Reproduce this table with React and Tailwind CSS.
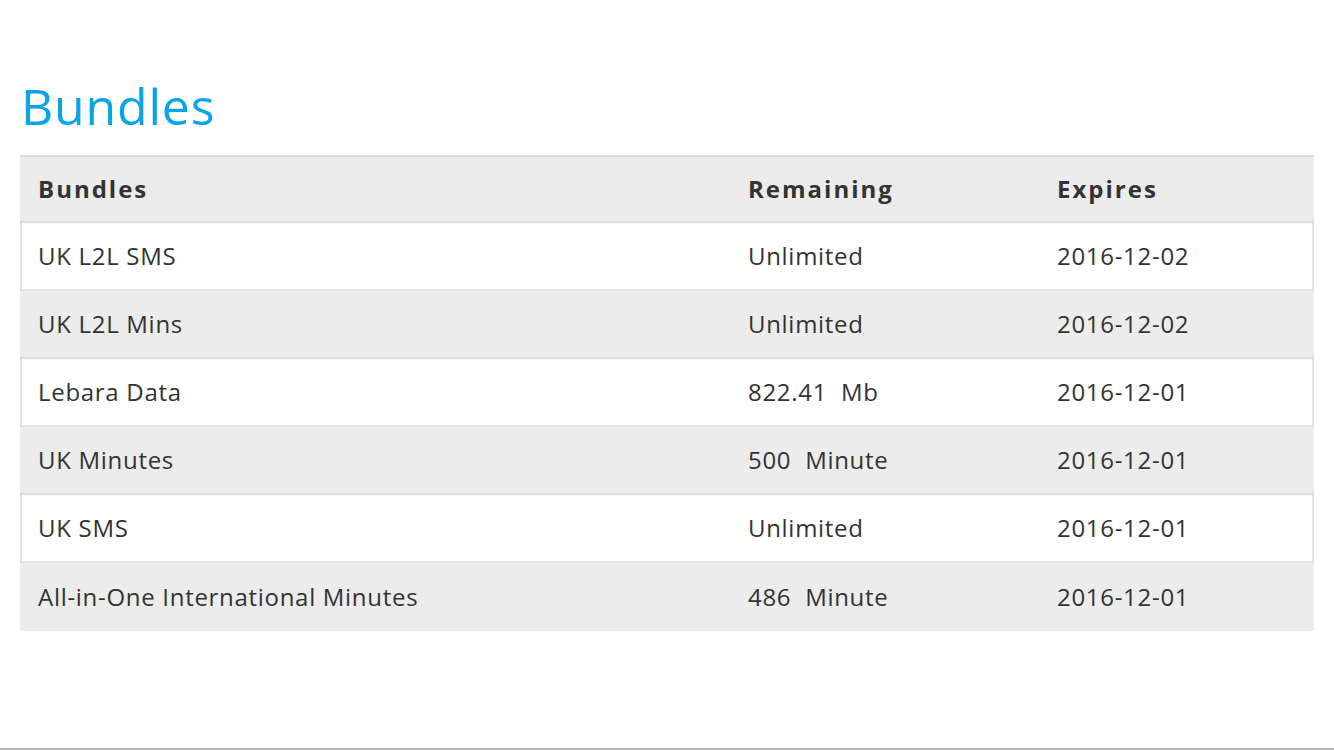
import React from "react";

const rows = [
  ["UK L2L SMS", "Unlimited", "2016-12-02"],
  ["UK L2L Mins", "Unlimited", "2016-12-02"],
  ["Lebara Data", "822.41\u00a0\u00a0Mb", "2016-12-01"],
  ["UK Minutes", "500\u00a0\u00a0Minute", "2016-12-01"],
  ["UK SMS", "Unlimited", "2016-12-01"],
  ["All-in-One International Minutes", "486\u00a0\u00a0Minute", "2016-12-01"],
];

export default function App() {
  return (
    <div
      className="h-[750px] w-[1334px] bg-white flex flex-col text-[#333333]"
      style={{ fontFamily: '"Open Sans", "Liberation Sans", sans-serif' }}
    >
      <div className="flex-1 px-5 pt-[78px]">
        <h1 className="text-[50px] leading-[56px] tracking-[0.8px] text-[#0aa5e8] pl-[1px] mb-[21px] font-normal">
          Bundles
        </h1>
        <div className="w-[1294px]">
          <div className="grid grid-cols-[710px_309px_1fr] h-[68px] bg-[#ececec] border-t-2 border-b-2 border-[#dcdcdc] items-center text-[24px] font-bold tracking-[2px]">
            <div className="pl-[18px]">Bundles</div>
            <div className="pl-[18px]">Remaining</div>
            <div className="pl-[18px]">Expires</div>
          </div>
          {rows.map((r, i) => {
            const white = i % 2 === 0;
            const last = i === rows.length - 1;
            return (
              <div
                key={i}
                className={
                  "grid h-[68px] items-center text-[24px] tracking-[0.7px] " +
                  (white
                    ? "grid-cols-[708px_309px_1fr] bg-white border-x-2 border-b-2 border-[#e3e3e3]"
                    : last
                    ? "grid-cols-[710px_309px_1fr] bg-[#ececec]"
                    : "grid-cols-[710px_309px_1fr] bg-[#ececec] border-b-2 border-[#dcdcdc]")
                }
              >
                <div className={white ? "pl-4" : "pl-[18px]"}>{r[0]}</div>
                <div className="pl-[18px]">{r[1]}</div>
                <div className="pl-[18px]">{r[2]}</div>
              </div>
            );
          })}
        </div>
      </div>
      <div className="h-[2px] border-b-2 border-[#b8b8b8]" />
    </div>
  );
}
